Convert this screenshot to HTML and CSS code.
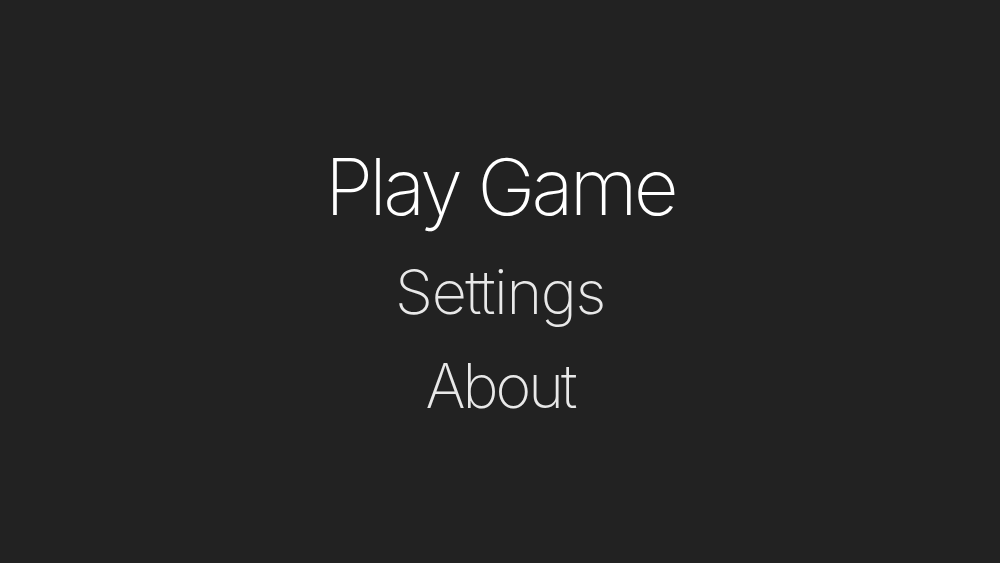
FILE: index.html
```html
<!DOCTYPE html>
<html>
<head>
<meta charset="utf-8">
<link rel="stylesheet" href="styles.css">
</head>
<body>
<main class="menu">
  <div class="item primary">Play Game</div>
  <div class="item settings">Settings</div>
  <div class="item about">About</div>
</main>
</body>
</html>
```
FILE: styles.css
```css
html, body {
  margin: 0;
  height: 100%;
  background: #222222;
}
.menu {
  box-sizing: border-box;
  height: 100%;
  padding-top: 1px;
  display: flex;
  flex-direction: column;
  align-items: center;
  justify-content: center;
  font-family: Inter, "Noto Sans", sans-serif;
  font-weight: 150;
}
.item {
  font-size: 61px;
  line-height: 61px;
  color: #e8e8e8;
  white-space: nowrap;
}
.item.primary {
  font-size: 78px;
  line-height: 78px;
  letter-spacing: -3.7px;
  color: #ffffff;
}
.item.settings {
  margin-top: 36px;
  letter-spacing: -1.4px;
}
.item.about {
  margin-top: 33px;
  letter-spacing: -3px;
}
```
